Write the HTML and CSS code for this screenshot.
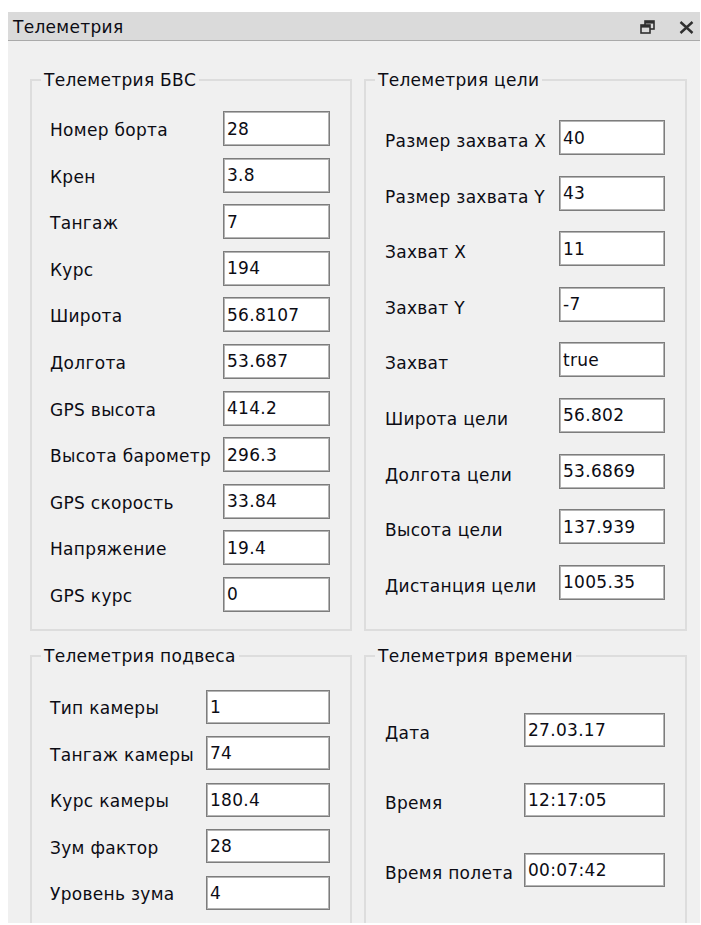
FILE: index.html
```html
<!DOCTYPE html>
<html lang="ru">
<head>
<meta charset="utf-8">
<title>Телеметрия</title>
<link rel="stylesheet" href="styles.css">
</head>
<body>
<div class="dock">
  <div class="dock-title">
    <span class="dock-caption">Телеметрия</span>
    <div class="dock-buttons">
      <svg class="btn-float" width="15" height="14" viewBox="0 0 15 14">
        <rect x="5" y="1" width="9" height="8" fill="none" stroke="#2f2f2f" stroke-width="1.6"/>
        <rect x="5" y="1" width="9" height="2.6" fill="#2f2f2f"/>
        <rect x="1" y="5" width="9" height="8" fill="#dadada" stroke="#2f2f2f" stroke-width="1.6"/>
        <rect x="1" y="5" width="9" height="2.6" fill="#2f2f2f"/>
      </svg>
      <svg class="btn-close" width="15" height="13" viewBox="0 0 15 13">
        <path d="M1.5 1 L13.5 12 M13.5 1 L1.5 12" stroke="#2f2f2f" stroke-width="2.4" fill="none"/>
      </svg>
    </div>
  </div>

  <div class="dock-body">
    <section class="group group-uav">
      <div class="group-title">Телеметрия БВС</div>
      <div class="fields">
        <span class="label">Номер борта</span><input class="value" readonly value="28">
        <span class="label">Крен</span><input class="value" readonly value="3.8">
        <span class="label">Тангаж</span><input class="value" readonly value="7">
        <span class="label">Курс</span><input class="value" readonly value="194">
        <span class="label">Широта</span><input class="value" readonly value="56.8107">
        <span class="label">Долгота</span><input class="value" readonly value="53.687">
        <span class="label">GPS высота</span><input class="value" readonly value="414.2">
        <span class="label">Высота барометр</span><input class="value" readonly value="296.3">
        <span class="label">GPS скорость</span><input class="value" readonly value="33.84">
        <span class="label">Напряжение</span><input class="value" readonly value="19.4">
        <span class="label">GPS курс</span><input class="value" readonly value="0">
      </div>
    </section>

    <section class="group group-target">
      <div class="group-title">Телеметрия цели</div>
      <div class="fields">
        <span class="label">Размер захвата X</span><input class="value" readonly value="40">
        <span class="label">Размер захвата Y</span><input class="value" readonly value="43">
        <span class="label">Захват X</span><input class="value" readonly value="11">
        <span class="label">Захват Y</span><input class="value" readonly value="-7">
        <span class="label">Захват</span><input class="value" readonly value="true">
        <span class="label">Широта цели</span><input class="value" readonly value="56.802">
        <span class="label">Долгота цели</span><input class="value" readonly value="53.6869">
        <span class="label">Высота цели</span><input class="value" readonly value="137.939">
        <span class="label">Дистанция цели</span><input class="value" readonly value="1005.35">
      </div>
    </section>

    <section class="group group-gimbal">
      <div class="group-title">Телеметрия подвеса</div>
      <div class="fields">
        <span class="label">Тип камеры</span><input class="value" readonly value="1">
        <span class="label">Тангаж камеры</span><input class="value" readonly value="74">
        <span class="label">Курс камеры</span><input class="value" readonly value="180.4">
        <span class="label">Зум фактор</span><input class="value" readonly value="28">
        <span class="label">Уровень зума</span><input class="value" readonly value="4">
      </div>
    </section>

    <section class="group group-time">
      <div class="group-title">Телеметрия времени</div>
      <div class="fields">
        <span class="label">Дата</span><input class="value" readonly value="27.03.17">
        <span class="label">Время</span><input class="value" readonly value="12:17:05">
        <span class="label">Время полета</span><input class="value" readonly value="00:07:42">
      </div>
    </section>
  </div>
</div>
</body>
</html>
```

FILE: styles.css
```css
html, body {
  margin: 0;
  padding: 0;
  background: #ffffff;
}

body {
  padding: 12px 1px 2px 8px;
  font-family: "DejaVu Sans", Tahoma, sans-serif;
  font-size: 17px;
  letter-spacing: 0.3px;
  color: #0c0c14;
}

/* dock widget frame */
.dock {
  width: 692px;
  height: 911px;
  overflow: hidden;
  background: #f0f0f0;
  display: flex;
  flex-direction: column;
}

.dock-title {
  height: 28px;
  flex: none;
  background: #dadada;
  border-bottom: 1px solid #aaaaaa;
  display: flex;
  align-items: center;
  justify-content: space-between;
  padding: 0 6px 0 5px;
}

.dock-caption {
  line-height: 20px;
  padding-top: 1px;
}

.dock-buttons {
  display: flex;
  align-items: center;
  gap: 24px;
  padding-top: 1px;
}

.btn-close {
  margin-top: 1px;
}

/* group boxes */
.dock-body {
  display: grid;
  grid-template-columns: 322px 323px;
  column-gap: 12px;
  row-gap: 24px;
  padding: 38px 0 0 22px;
  align-items: stretch;
}

.group {
  border: 2px solid #dddddd;
  min-width: 0;
}

.group-title {
  width: fit-content;
  margin: -11px 0 0 9px;
  padding: 0 3px;
  line-height: 20px;
  background: #f0f0f0;
}

.fields {
  display: grid;
  align-items: center;
}

.label {
  white-space: nowrap;
  padding-top: 3px;
}

.group-target .label,
.group-time .label {
  padding-top: 7px;
}

.value {
  box-sizing: border-box;
  height: 35px;
  margin: 0;
  padding: 0 3px;
  font: inherit;
  letter-spacing: inherit;
  color: #0c0c14;
  background: #ffffff;
  border: 1px solid #7d7d7d;
  box-shadow: inset 0 0 0 1px #b4b4b4;
  outline: none;
}

.group-uav .fields {
  grid-template-columns: 173px 107px;
  grid-auto-rows: 35px;
  row-gap: 11.6px;
  padding: 21px 0 17px 18px;
}

.group-target .fields {
  grid-template-columns: 174px 106px;
  grid-auto-rows: 35px;
  row-gap: 20.6px;
  padding: 30px 0 0 19px;
}

.group-gimbal .fields {
  grid-template-columns: 156px 124px;
  grid-auto-rows: 34px;
  row-gap: 12.5px;
  padding: 24px 0 40px 18px;
}

.group-time .fields {
  grid-template-columns: 139px 141px;
  grid-auto-rows: 34px;
  row-gap: 36px;
  padding: 47px 0 40px 19px;
}

.group-gimbal .value,
.group-time .value {
  height: 34px;
}
```
